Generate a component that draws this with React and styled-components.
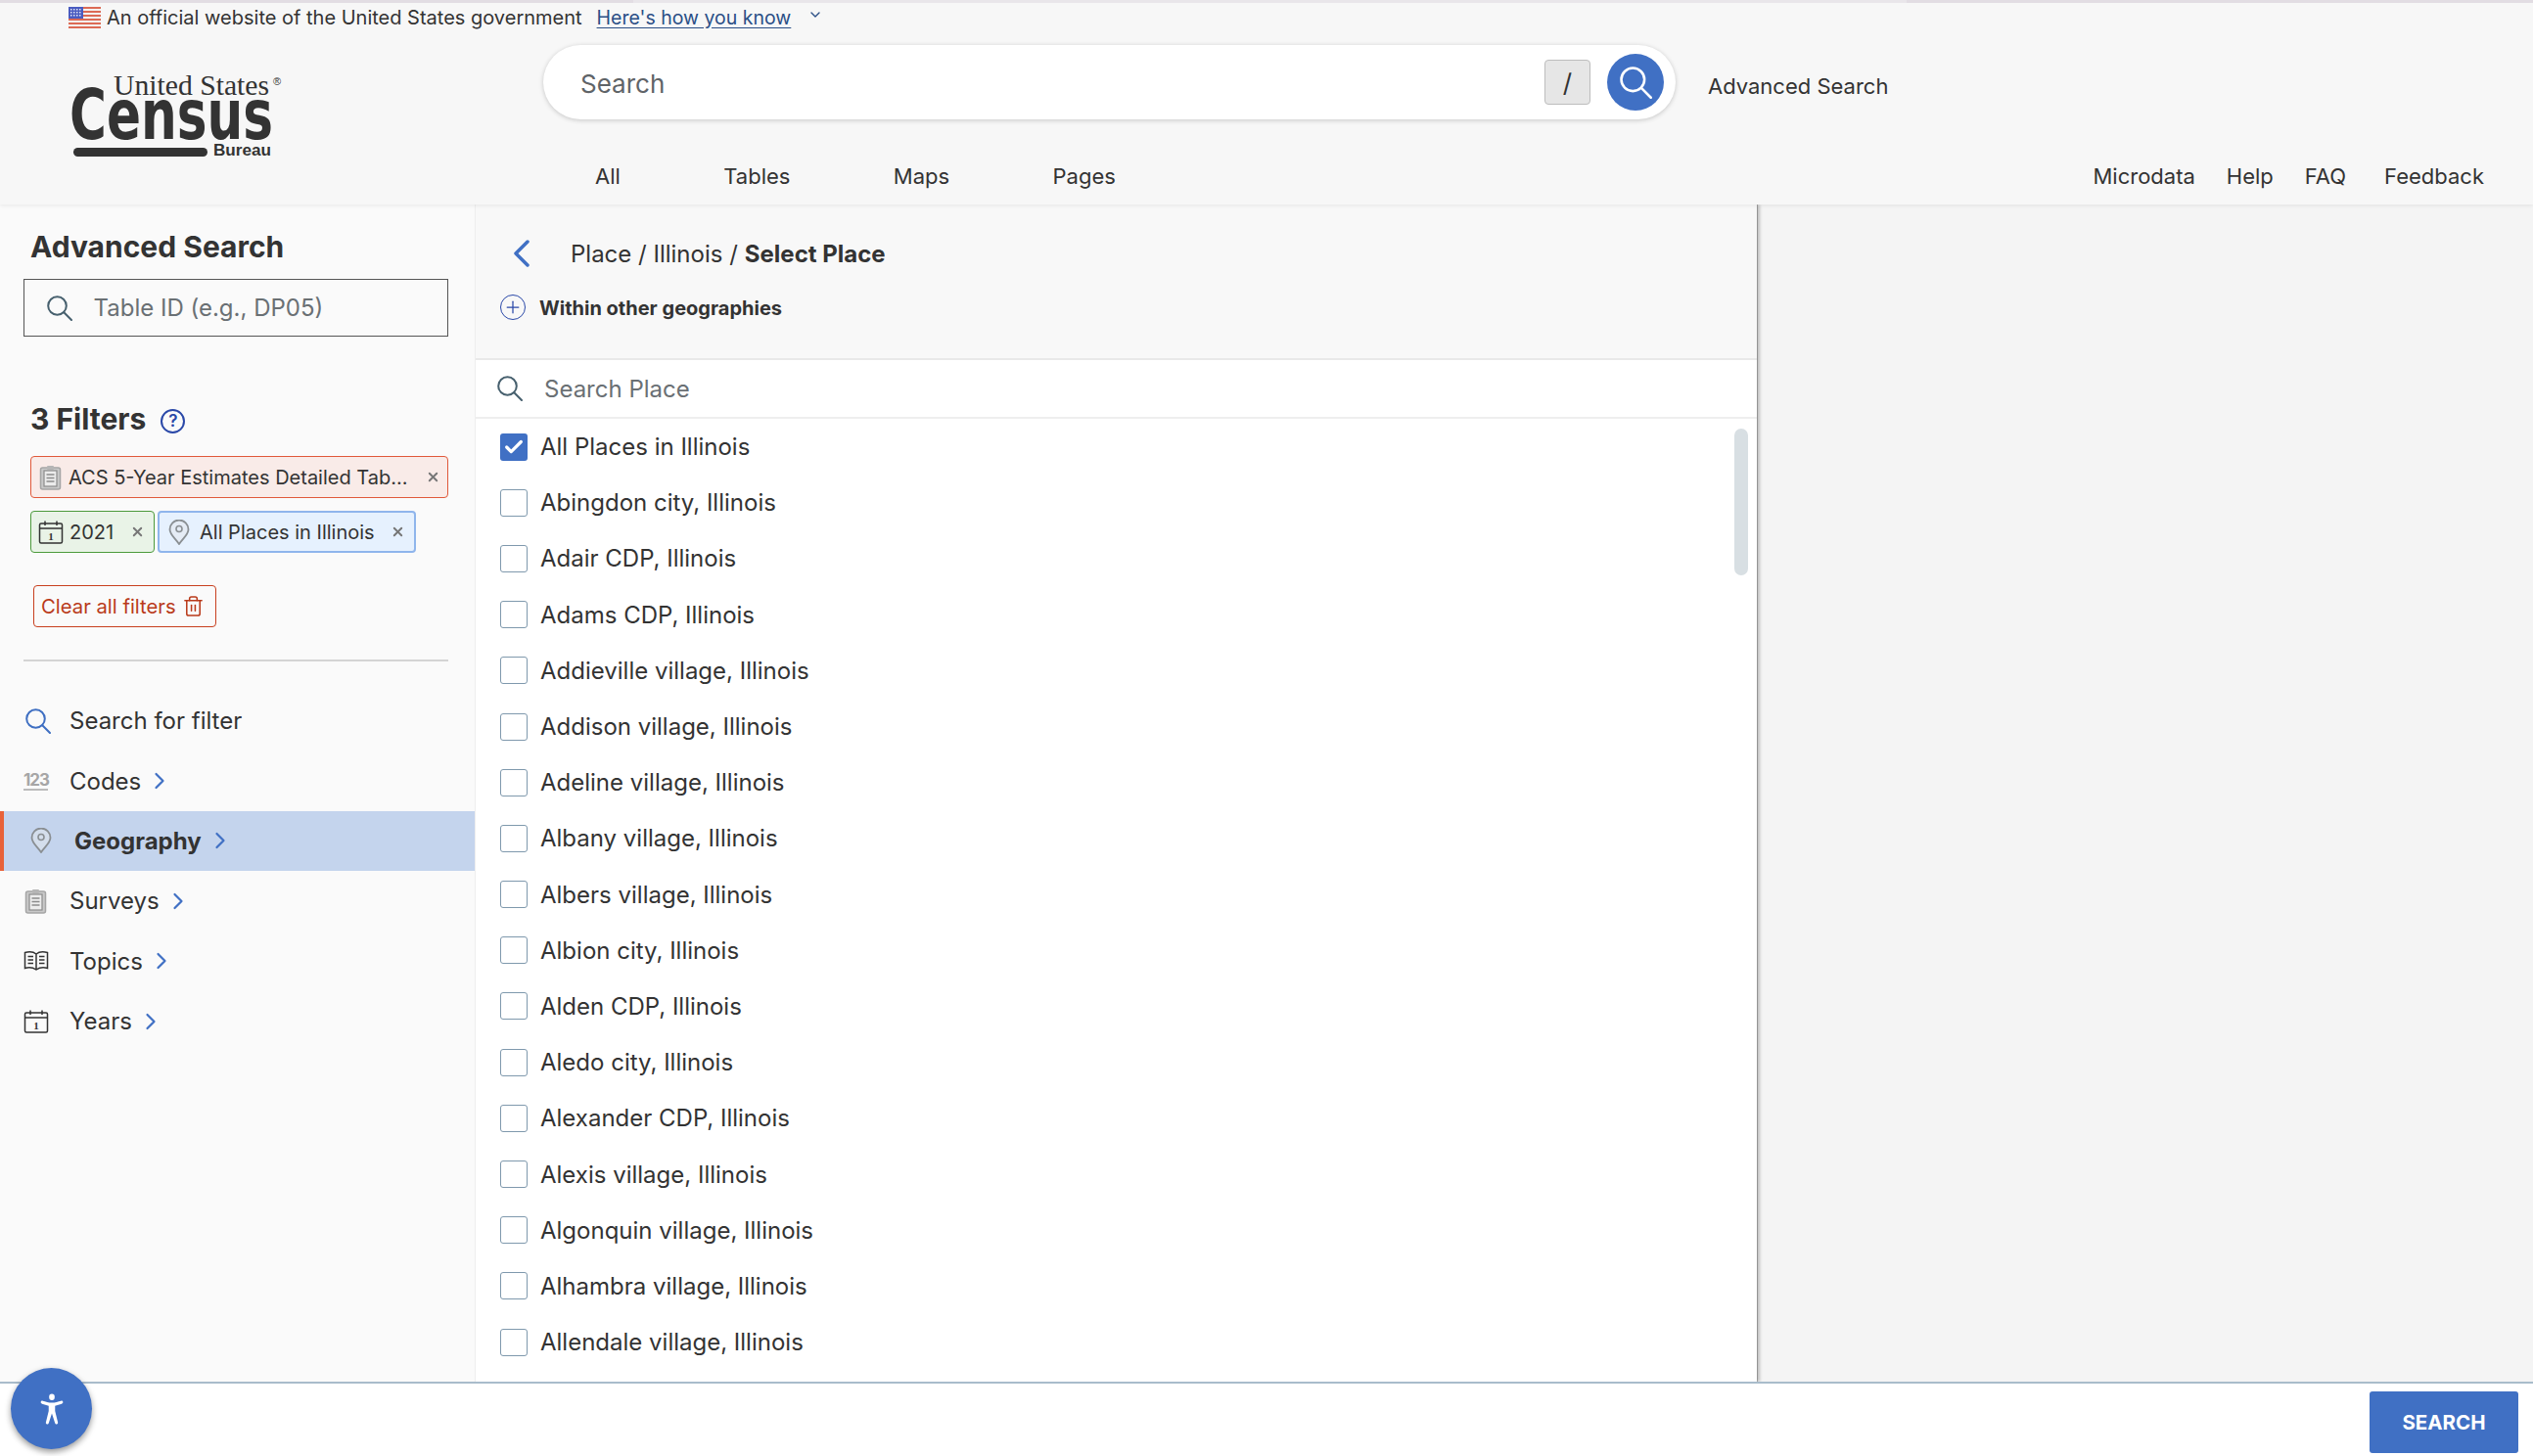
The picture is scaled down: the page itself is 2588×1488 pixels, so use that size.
import styled, { createGlobalStyle } from "styled-components";
import { ChevronRight, ChevronLeft, ChevronDown, X, Trash2, Check, Plus } from "lucide-react";

const GlobalStyle = createGlobalStyle`
  html, body { margin: 0; padding: 0; background: #fff; }
  body { font-family: Inter, "Liberation Sans", sans-serif; color: #333; overflow: hidden; }
`;

const Page = styled.div`
  width: 2588px;
  height: 1488px;
  display: flex;
  flex-direction: column;
  position: relative;
  overflow: hidden;
`;

const Header = styled.header`
  height: 209px;
  flex: none;
  background: #f7f7f7;
  display: flex;
  flex-direction: column;
  box-shadow: 0 1px 4px rgba(0, 0, 0, 0.08);
  position: relative;
  z-index: 2;
`;
const TopLine = styled.div`
  height: 3px;
  display: flex;
  flex: none;
`;
const TopSeg = styled.div`
  flex: ${({ $grow }) => $grow};
  background: ${({ $bg }) => $bg};
`;
const Banner = styled.div`
  height: 29px;
  padding-left: 70px;
  display: flex;
  align-items: center;
  font-size: 20px;
  line-height: 26px;
  flex: none;
`;
const BannerText = styled.span`
  margin-left: 6px;
`;
const BannerLink = styled.a`
  margin-left: 15px;
  font-size: 19.5px;
  color: #2b4f86;
  text-decoration: underline;
  text-underline-offset: 3px;
`;
const BannerCaret = styled.span`
  display: flex;
  margin-left: 17px;
  margin-top: -6px;
  color: #2b4f86;
`;
const HeaderBody = styled.div`
  display: flex;
  flex: 1;
  padding-left: 72px;
`;
const LogoBox = styled.div`
  width: 483px;
  flex: none;
  padding-top: 43px;
`;
const HeaderMain = styled.div`
  flex: 1;
  display: flex;
  flex-direction: column;
  padding-top: 14px;
`;
const SearchRow = styled.div`
  display: flex;
  align-items: center;
`;
const SearchPill = styled.div`
  width: 1157px;
  height: 76px;
  box-sizing: border-box;
  background: #fff;
  border-radius: 38px;
  box-shadow: 0 1px 5px rgba(0, 0, 0, 0.2);
  display: flex;
  align-items: center;
  padding: 0 12px 0 38px;
`;
const SearchLabel = styled.span`
  flex: 1;
  font-size: 26px;
  margin-top: 2px;
  color: #5f6468;
`;
const SlashKey = styled.span`
  width: 47px;
  height: 46px;
  box-sizing: border-box;
  background: #e6e6e6;
  border: 1px solid #bdbdbd;
  border-radius: 4px;
  display: flex;
  align-items: center;
  justify-content: center;
  font-size: 26px;
  color: #333;
  margin-right: 17px;
`;
const RoundButton = styled.span`
  width: 58px;
  height: 58px;
  border-radius: 50%;
  background: #4070c4;
  color: #fff;
  display: flex;
  align-items: center;
  justify-content: center;
`;
const AdvancedLink = styled.a`
  margin-left: 33px;
  margin-top: 7px;
  font-size: 22px;
`;
const NavRow = styled.nav`
  margin-top: 43px;
  display: flex;
  justify-content: space-between;
  padding: 0 50px 0 53px;
  font-size: 22px;
  line-height: 30px;
`;
const NavGroup = styled.div`
  display: flex;
  gap: ${({ $gap }) => $gap}px;
`;
const NavLink = styled.a`
  margin-left: ${({ $extra }) => $extra || 0}px;
`;

const Content = styled.div`
  flex: 1;
  min-height: 0;
  display: flex;
`;
const Sidebar = styled.aside`
  width: 485px;
  flex: none;
  background: #fafafa;
  display: flex;
  flex-direction: column;
`;
const SideTop = styled.div`
  padding: 23px 27px 0 24px;
  display: flex;
  flex-direction: column;
`;
const SideHeading = styled.h2`
  margin: 0 0 0 7px;
  height: 40px;
  font-size: 30px;
  line-height: 40px;
  font-weight: 700;
  color: #333;
  display: flex;
  align-items: center;
`;
const TableInput = styled.div`
  margin-top: 13px;
  height: 59px;
  box-sizing: border-box;
  border: 1.5px solid #555;
  display: flex;
  align-items: center;
  padding-left: 22.5px;
  background: #fafafa;
  font-size: 24px;
  color: #6a7074;
`;
const GrayIcon = styled.span`
  display: flex;
  color: #47606e;
  margin-right: ${({ $gap }) => $gap}px;
`;
const FiltersHead = styled(SideHeading)`
  margin-top: 64px;
`;
const HelpIcon = styled.span`
  width: 25px;
  height: 25px;
  box-sizing: border-box;
  border: 2px solid #2a48a8;
  border-radius: 50%;
  margin: 4px 0 0 15px;
  color: #2a48a8;
  font-size: 17px;
  font-weight: 600;
  display: flex;
  align-items: center;
  justify-content: center;
`;
const ChipWrap = styled.div`
  margin: 18px 0 0 7px;
  display: flex;
  flex-wrap: wrap;
  gap: 13px 3px;
`;
const Chip = styled.div`
  width: ${({ $w }) => $w}px;
  height: 43px;
  box-sizing: border-box;
  border: ${({ $tone }) => ($tone === "blue" ? "2px" : "1.5px")} solid ${({ $tone }) =>
    $tone === "red" ? "#e0593a" : $tone === "green" ? "#4c9a3c" : "#8fb5ec"};
  background: ${({ $tone }) => ($tone === "red" ? "#f9ebe8" : $tone === "green" ? "#e9f3e7" : "#e6f1fe")};
  border-radius: 4px;
  display: flex;
  align-items: center;
  padding: 0 ${({ $tone }) => ($tone === "red" ? 7 : 9)}px 0 7px;
  font-size: 20px;
  color: #333;
`;
const ChipText = styled.span`
  flex: 1;
  margin-left: ${({ $gap }) => $gap}px;
  white-space: nowrap;
`;
const ChipClose = styled.span`
  display: flex;
  color: #777;
`;
const ClearButton = styled.div`
  margin: 33px 0 0 10px;
  width: 187px;
  height: 43px;
  box-sizing: border-box;
  border: 1.5px solid #c8401f;
  border-radius: 4px;
  color: #b93a1a;
  display: flex;
  align-items: center;
  padding-left: 7px;
  gap: 6px;
  font-size: 20.3px;
  white-space: nowrap;
`;
const Divider = styled.div`
  margin-top: 33px;
  height: 2px;
  background: #d4d4d4;
`;
const SideList = styled.div`
  margin-top: 30px;
  display: flex;
  flex-direction: column;
`;
const SideItem = styled.div`
  height: 61.4px;
  box-sizing: border-box;
  display: flex;
  align-items: center;
  padding-left: ${({ $active }) => ($active ? 25 : 24)}px;
  background: ${({ $active }) => ($active ? "#c4d4ed" : "transparent")};
  border-left: ${({ $active }) => ($active ? "4px solid #e8623a" : "none")};
  font-size: 24px;
  font-weight: ${({ $active }) => ($active ? 700 : 400)};
`;
const SideIcon = styled.span`
  width: 47px;
  flex: none;
  display: flex;
  color: ${({ $tone }) => $tone};
  padding-left: ${({ $inset }) => $inset || 0}px;
  box-sizing: border-box;
`;
const ChevronBox = styled.span`
  display: flex;
  margin-left: 5px;
  color: #4070c4;
`;
const DigitsIcon = styled.span`
  font-size: 17px;
  font-weight: 700;
  letter-spacing: -1px;
  color: #a6a6a6;
  border-bottom: 2px solid #bbb;
  line-height: 17px;
  width: 25px;
`;

const Panel = styled.main`
  width: 1310px;
  flex: none;
  background: #fff;
  display: flex;
  flex-direction: column;
  box-shadow: 3px 0 3px rgba(0, 0, 0, 0.22), 1px 0 0 #bbb;
  border-left: 1px solid #eee;
  box-sizing: border-box;
  position: relative;
  z-index: 1;
`;
const PanelHead = styled.div`
  height: 159px;
  flex: none;
  box-sizing: border-box;
  background: #f8f8f8;
  border-bottom: 2px solid #e9e9e9;
  display: flex;
  flex-direction: column;
  padding: 33px 0 0 25px;
`;
const Crumbs = styled.div`
  display: flex;
  align-items: center;
  height: 34px;
  font-size: 24px;
`;
const BackIcon = styled.span`
  display: flex;
  color: #4070c4;
  margin: 0 26px 0 -2px;
`;
const Strong = styled.strong`
  font-weight: 700;
  margin-left: 7px;
`;
const Within = styled.div`
  display: flex;
  align-items: center;
  margin-top: 25px;
  font-size: 20px;
  font-weight: 700;
  height: 28px;
`;
const PlusIcon = styled.span`
  width: 26px;
  height: 26px;
  box-sizing: border-box;
  border: 1.5px solid #2a48a8;
  border-radius: 50%;
  display: flex;
  align-items: center;
  justify-content: center;
  color: #2a48a8;
  margin: -2px 14px 0 0;
`;
const PlaceSearch = styled.div`
  height: 60px;
  flex: none;
  box-sizing: border-box;
  border-bottom: 2px solid #eee;
  display: flex;
  align-items: center;
  padding-left: 22px;
  font-size: 24px;
  color: #6a7074;
`;
const PlaceList = styled.div`
  flex: 1;
  min-height: 0;
  overflow: hidden;
  padding: 0 0 0 25px;
  position: relative;
`;
const ThumbBar = styled.div`
  position: absolute;
  top: 10px;
  right: 9px;
  width: 14px;
  height: 150px;
  border-radius: 7px;
  background: #d8dfe3;
`;
const PlaceRow = styled.label`
  height: 57.2px;
  display: flex;
  align-items: center;
  font-size: 24px;
  color: #333;
`;
const CheckBox = styled.span`
  width: 28px;
  height: 28px;
  box-sizing: border-box;
  border-radius: 3px;
  border: ${({ $on }) => ($on ? "none" : "1.5px solid #7f99ad")};
  background: ${({ $on }) => ($on ? "#4070c4" : "#fff")};
  color: #fff;
  margin-right: 13px;
  display: flex;
  align-items: center;
  justify-content: center;
  flex: none;
`;
const RightPane = styled.div`
  flex: 1;
  background: #f4f4f4;
`;

const Footer = styled.footer`
  height: 76px;
  flex: none;
  box-sizing: border-box;
  border-top: 2px solid #a9bccb;
  background: #fff;
  display: flex;
  justify-content: flex-end;
  padding: 8px 15px 0 0;
  position: relative;
  z-index: 3;
`;
const SubmitButton = styled.button`
  width: 152px;
  height: 63px;
  border: none;
  border-radius: 3px;
  background: #4070c4;
  color: #fff;
  font: 700 20.5px Inter, "Liberation Sans", sans-serif;
`;
const AccessButton = styled.div`
  position: absolute;
  left: 11px;
  top: 1398px;
  width: 83px;
  height: 83px;
  border-radius: 50%;
  background: #4070c4;
  box-shadow: 0 3px 6px rgba(0, 0, 0, 0.4);
  color: #fff;
  display: flex;
  align-items: center;
  justify-content: center;
  z-index: 4;
`;

const Flag = () => (
  <svg width="33" height="22" viewBox="0 0 33 22">
    <rect width="33" height="22" fill="#f4f1ef" />
    {[0, 4, 8, 12, 16, 20].map((y) => (
      <rect key={y} y={y} width="33" height="2" fill="#dc6a55" />
    ))}
    <rect width="15" height="12" fill="#4a5bc0" />
    {[2, 5, 8, 11].map((x) =>
      [2, 5, 8].map((y) => <rect key={x + "-" + y} x={x} y={y} width="1.5" height="1.5" fill="#dfe3f5" />)
    )}
  </svg>
);

const Logo = () => (
  <svg width="218" height="92" viewBox="0 0 218 92">
    <text x="44" y="22" fontFamily="'Liberation Serif', serif" fontSize="30" fill="#333" textLength="159" lengthAdjust="spacingAndGlyphs">
      United States
    </text>
    <text x="207" y="12" fontFamily="'Liberation Sans', sans-serif" fontSize="11" fill="#333">®</text>
    <text x="-1" y="67" fontFamily="'DejaVu Sans', sans-serif" fontWeight="700" fontSize="71" fill="#333" textLength="208" lengthAdjust="spacingAndGlyphs">
      Census
    </text>
    <rect x="3" y="76" width="137" height="9" rx="4.5" fill="#333" />
    <text x="146" y="84" fontFamily="'Liberation Sans', sans-serif" fontWeight="700" fontSize="17" fill="#333" textLength="59" lengthAdjust="spacingAndGlyphs">
      Bureau
    </text>
  </svg>
);

// smaller lens and longer handle than the lucide search glyph
const Magnifier = ({ size = 26, stroke = 2 }) => (
  <svg width={size} height={size} viewBox="0 0 26 26" fill="none" stroke="currentColor" strokeWidth={stroke}>
    <circle cx="10.5" cy="10.5" r="9.300" />
    <path d="M17.300 17.300L25 25" strokeLinecap="round" />
  </svg>
);

const ClipboardIcon = ({ size = 26 }) => (
  <svg width={size} height={size} viewBox="0 0 26 26" fill="none">
    <rect x="2.5" y="3" width="20" height="22" rx="2" fill="#c9c9c9" stroke="#a5a5a5" strokeWidth="1.5" />
    <rect x="6" y="6" width="13" height="16" fill="#ececec" stroke="#8c8c8c" strokeWidth="1.2" />
    <rect x="9" y="1" width="7" height="4" rx="1" fill="#b5b5b5" />
    <path d="M8.5 10h8M8.5 13.5h8M8.5 17h8" stroke="#8c8c8c" strokeWidth="1.3" />
  </svg>
);

const PinIcon = ({ size = 26 }) => (
  <svg width={size} height={size} viewBox="0 0 26 26" fill="none">
    <path d="M13 25C9 19 3.500 15.500 3.500 10a9.500 9.500 0 0 1 19 0c0 5.500-5.500 9-9.500 15z" stroke="#8a8f93" strokeWidth="1.800" fill="#e4e8ec" fillOpacity="0.5" />
    <circle cx="13" cy="9.500" r="3" stroke="#8a8f93" strokeWidth="1.600" />
  </svg>
);

const CalendarIcon = ({ size = 26 }) => (
  <svg width={size} height={size} viewBox="0 0 26 26" fill="none">
    <rect x="1.5" y="4" width="23" height="20" rx="1.5" stroke="#333" strokeWidth="1.5" />
    <path d="M1.5 9h23M7 1.5V6M19 1.5V6" stroke="#333" strokeWidth="1.5" />
    <text x="13" y="21" textAnchor="middle" fontFamily="'Liberation Serif', serif" fontWeight="700" fontSize="11" fill="#333">1</text>
  </svg>
);

const BookIcon = () => (
  <svg width="26" height="26" viewBox="0 0 26 26" fill="none" stroke="#333" strokeWidth="1.5">
    <path d="M13 6C10 3.500 5 3.500 1.500 4.500v16C5 19.500 10 20 13 22c3-2 8-2.500 11.500-1.500v-16C21 3.500 16 3.500 13 6zM13 6v16" />
    <path d="M4.500 8.500h5.500M4.500 12h5.500M4.500 15.500h5.500M16 8.500h5.500M16 12h5.500M16 15.500h5.500" strokeWidth="1.300" />
  </svg>
);

const AccessIcon = () => (
  <svg width="26" height="32" viewBox="0 0 32 38" fill="currentColor">
    <ellipse cx="16" cy="4" rx="3.500" ry="4" />
    <path d="M2 10.500c0-1.500 1.200-2.200 2.600-1.800C8 9.600 12 11 16 11s8-1.400 11.400-2.300c1.400-.4 2.600.3 2.600 1.800 0 1-.7 1.600-1.700 1.900l-8.300 2.600v6.500l3.500 14c.3 1.300-.3 2.300-1.400 2.500-1 .2-1.800-.4-2.200-1.500L16 24.500 12.100 36.500c-.4 1.100-1.200 1.700-2.200 1.500-1.100-.2-1.700-1.200-1.400-2.500l3.500-14V15l-8.300-2.600C2.700 12.100 2 11.500 2 10.500z" />
  </svg>
);

const chevron = <ChevronRight size={28} strokeWidth={1.9} />;

const sideItems = [
  { label: "Codes", icon: <DigitsIcon>123</DigitsIcon> },
  { label: "Geography", icon: <PinIcon />, active: true },
  { label: "Surveys", icon: <ClipboardIcon /> },
  { label: "Topics", icon: <BookIcon /> },
  { label: "Years", icon: <CalendarIcon /> },
];

const places = [
  "All Places in Illinois",
  "Abingdon city, Illinois",
  "Adair CDP, Illinois",
  "Adams CDP, Illinois",
  "Addieville village, Illinois",
  "Addison village, Illinois",
  "Adeline village, Illinois",
  "Albany village, Illinois",
  "Albers village, Illinois",
  "Albion city, Illinois",
  "Alden CDP, Illinois",
  "Aledo city, Illinois",
  "Alexander CDP, Illinois",
  "Alexis village, Illinois",
  "Algonquin village, Illinois",
  "Alhambra village, Illinois",
  "Allendale village, Illinois",
];

const App = () => {
  return (
    <Page>
      <GlobalStyle />
      <Header>
        <TopLine>
          <TopSeg $grow={647} $bg="#e2dde3" />
          <TopSeg $grow={1301} $bg="#e9e6ea" />
          <TopSeg $grow={640} $bg="#e2dde3" />
        </TopLine>
        <Banner>
          <Flag />
          <BannerText>An official website of the United States government</BannerText>
          <BannerLink>Here's how you know</BannerLink>
          <BannerCaret>
            <ChevronDown size={16} />
          </BannerCaret>
        </Banner>
        <HeaderBody>
          <LogoBox>
            <Logo />
          </LogoBox>
          <HeaderMain>
            <SearchRow>
              <SearchPill>
                <SearchLabel>Search</SearchLabel>
                <SlashKey>/</SlashKey>
                <RoundButton>
                  <Magnifier size={33} stroke={2} />
                </RoundButton>
              </SearchPill>
              <AdvancedLink>Advanced Search</AdvancedLink>
            </SearchRow>
            <NavRow>
              <NavGroup $gap={105.4}>
                <NavLink>All</NavLink>
                <NavLink>Tables</NavLink>
                <NavLink>Maps</NavLink>
                <NavLink>Pages</NavLink>
              </NavGroup>
              <NavGroup $gap={32}>
                <NavLink>Microdata</NavLink>
                <NavLink>Help</NavLink>
                <NavLink>FAQ</NavLink>
                <NavLink $extra={7}>Feedback</NavLink>
              </NavGroup>
            </NavRow>
          </HeaderMain>
        </HeaderBody>
      </Header>
      <Content>
        <Sidebar>
          <SideTop>
            <SideHeading>Advanced Search</SideHeading>
            <TableInput>
              <GrayIcon $gap={22}>
                <Magnifier />
              </GrayIcon>
              Table ID (e.g., DP05)
            </TableInput>
            <FiltersHead>
              3 Filters
              <HelpIcon>?</HelpIcon>
            </FiltersHead>
            <ChipWrap>
              <Chip $tone="red" $w={427}>
                <ClipboardIcon />
                <ChipText $gap={5}>ACS 5-Year Estimates Detailed Tab...</ChipText>
                <ChipClose>
                  <X size={15} strokeWidth={3} />
                </ChipClose>
              </Chip>
              <Chip $tone="green" $w={127}>
                <CalendarIcon />
                <ChipText $gap={6}>2021</ChipText>
                <ChipClose>
                  <X size={15} strokeWidth={3} />
                </ChipClose>
              </Chip>
              <Chip $tone="blue" $w={264}>
                <PinIcon />
                <ChipText $gap={8}>All Places in Illinois</ChipText>
                <ChipClose>
                  <X size={15} strokeWidth={3} />
                </ChipClose>
              </Chip>
            </ChipWrap>
            <ClearButton>
              Clear all filters
              <Trash2 size={23} strokeWidth={1.6} />
            </ClearButton>
            <Divider />
          </SideTop>
          <SideList>
            <SideItem>
              <SideIcon $tone="#3f6fc2" $inset={2}>
                <Magnifier />
              </SideIcon>
              Search for filter
            </SideItem>
            {sideItems.map((item, index) => (
              <SideItem $active={item.active} key={index}>
                <SideIcon>{item.icon}</SideIcon>
                {item.label}
                <ChevronBox>{chevron}</ChevronBox>
              </SideItem>
            ))}
          </SideList>
        </Sidebar>
        <Panel>
          <PanelHead>
            <Crumbs>
              <BackIcon>
                <ChevronLeft size={48} strokeWidth={1.75} />
              </BackIcon>
              Place / Illinois /<Strong>Select Place</Strong>
            </Crumbs>
            <Within>
              <PlusIcon>
                <Plus size={20} strokeWidth={1.5} />
              </PlusIcon>
              Within other geographies
            </Within>
          </PanelHead>
          <PlaceSearch>
            <GrayIcon $gap={22}>
              <Magnifier />
            </GrayIcon>
            Search Place
          </PlaceSearch>
          <PlaceList>
            <ThumbBar />
            {places.map((name, index) => (
              <PlaceRow key={index}>
                <CheckBox $on={index === 0}>{index === 0 && <Check size={22} strokeWidth={3.5} />}</CheckBox>
                {name}
              </PlaceRow>
            ))}
          </PlaceList>
        </Panel>
        <RightPane />
      </Content>
      <Footer>
        <SubmitButton>SEARCH</SubmitButton>
      </Footer>
      <AccessButton>
        <AccessIcon />
      </AccessButton>
    </Page>
  );
};

export default App;
